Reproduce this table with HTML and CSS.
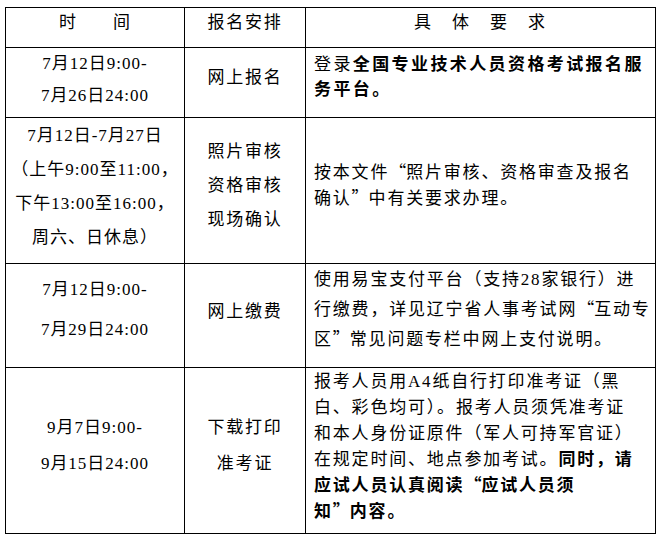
FILE: index.html
```html
<!DOCTYPE html>
<html lang="zh-CN">
<head>
<meta charset="utf-8">
<title>报名安排</title>
<link rel="stylesheet" href="styles.css">
</head>
<body>
<table class="schedule">
  <colgroup>
    <col class="c-time">
    <col class="c-plan">
    <col class="c-req">
  </colgroup>
  <tr class="r-head">
    <td class="time pb10">时　　间</td>
    <td class="plan pb10">报名安排</td>
    <td class="head-req pb10">具　体　要　求</td>
  </tr>
  <tr class="r-1">
    <td class="time lh32 pb5">7月12日9:00-<br>7月26日24:00</td>
    <td class="plan pb9">网上报名</td>
    <td class="req lh25 wide pb11">登录<b>全国专业技术人员资格考试报名服<br>务平台。</b></td>
  </tr>
  <tr class="r-2">
    <td class="time lh34 pb8">7月12日-7月27日<br>（上午9:00至11:00，<br>下午13:00至16:00，<br>周六、日休息）</td>
    <td class="plan lh34 pb10">照片审核<br>资格审核<br>现场确认</td>
    <td class="req lh26 pb10">按本文件<span class="qo">“</span>照片审核、资格审查及报名<br>确认<span class="qc">”</span>中有关要求办理。</td>
  </tr>
  <tr class="r-3">
    <td class="time lh40 pb12">7月12日9:00-<br>7月29日24:00</td>
    <td class="plan pb8">网上缴费</td>
    <td class="req lh30 pb12">使用易宝支付平台（支持28家银行）进<br>行缴费，详见辽宁省人事考试网<span class="qo">“</span>互动专<br>区<span class="qc">”</span>常见问题专栏中网上支付说明。</td>
  </tr>
  <tr class="r-4">
    <td class="time lh36 pb10">9月7日9:00-<br>9月15日24:00</td>
    <td class="plan lh36 pb10">下载打印<br>准考证</td>
    <td class="req lh26 pb8">报考人员用A4纸自行打印准考证（黑<br>白、彩色均可）。报考人员须凭准考证<br>和本人身份证原件（军人可持军官证）<br>在规定时间、地点参加考试。<b>同时，请<br>应试人员认真阅读<span class="qo">“</span>应试人员须<br>知<span class="qc">”</span>内容。</b></td>
  </tr>
</table>
</body>
</html>
```
FILE: styles.css
```css
html, body {
  background: #ffffff;
}
body {
  margin: 7px 0 0 5px;
  font-family: "Liberation Serif", "Noto Sans CJK SC", serif;
  font-size: 17px;
  color: #000;
}
.schedule {
  border-collapse: collapse;
  table-layout: fixed;
  width: 650px;
}
.c-time { width: 179px; }
.c-plan { width: 121px; }
.c-req { width: 350px; }
.schedule td {
  border: 1px solid #000;
  padding: 0;
  vertical-align: middle;
  line-height: 22px;
}
.r-head { height: 40px; }
.r-1 { height: 69px; }
.r-2 { height: 146px; }
.r-3 { height: 104px; }
.r-4 { height: 166px; }

.time {
  text-align: center;
  letter-spacing: 1px;
}
.plan {
  text-align: center;
  letter-spacing: 1.8px;
}
.head-req {
  text-align: center;
  letter-spacing: 2px;
}
.schedule td.req {
  text-align: left;
  white-space: nowrap;
  padding-left: 8px;
  letter-spacing: 1.8px;
}
.schedule td.wide { letter-spacing: 2.4px; }
.req b { font-weight: 700; }

/* full-width CJK quotation marks */
.qo, .qc {
  display: inline-block;
  width: 17px;
  line-height: 17px;
  font-family: "Noto Sans CJK SC", sans-serif;
}
.qo { text-align: right; }
.qc { text-align: left; }

.schedule td.lh25 { line-height: 25px; }
.schedule td.lh26 { line-height: 26px; }
.schedule td.lh30 { line-height: 30px; }
.schedule td.lh32 { line-height: 32px; }
.schedule td.lh34 { line-height: 34px; }
.schedule td.lh36 { line-height: 36px; }
.schedule td.lh40 { line-height: 40px; }

.schedule td.pb5 { padding-bottom: 5px; }
.schedule td.pb8 { padding-bottom: 8px; }
.schedule td.pb9 { padding-bottom: 9px; }
.schedule td.pb10 { padding-bottom: 10px; }
.schedule td.pb11 { padding-bottom: 11px; }
.schedule td.pb12 { padding-bottom: 12px; }
```
